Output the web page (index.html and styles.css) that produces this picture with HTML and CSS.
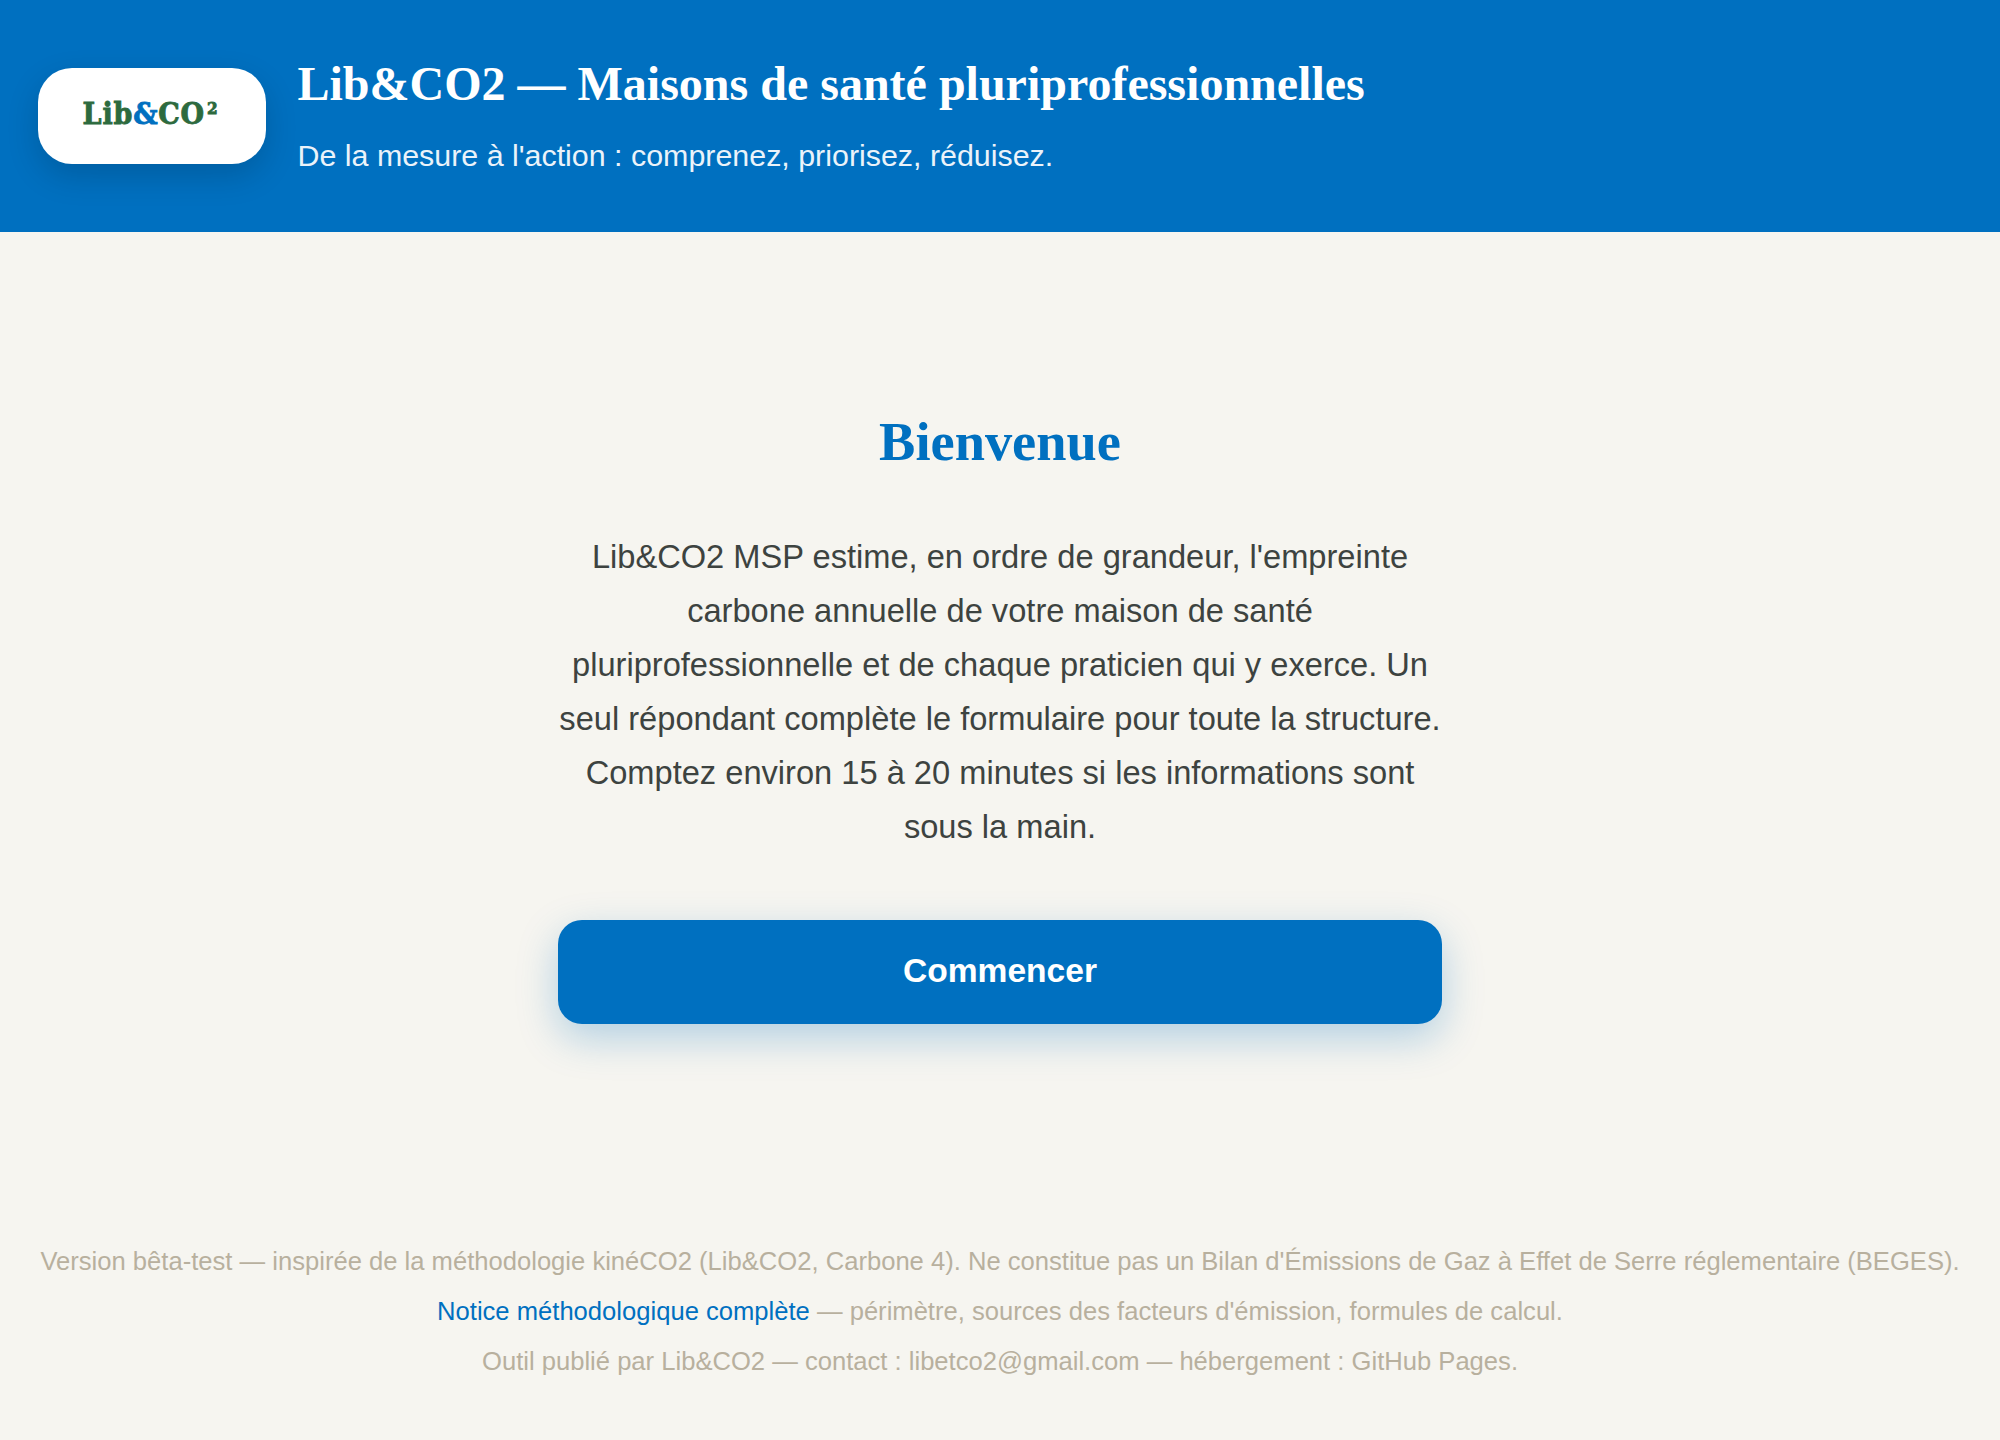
FILE: index.html
```html
<!DOCTYPE html>
<html lang="fr">
<head>
    <meta charset="UTF-8">
    <meta name="viewport" content="width=device-width, initial-scale=1.0">
    <title>Lib&amp;CO2 MSP</title>
    <link rel="stylesheet" href="styles.css">
</head>
<body>
    <header class="site-header">
        <div class="logo"><span class="logo-green">Lib</span><span class="logo-blue">&amp;</span><span class="logo-green">CO<span class="logo-sup">2</span></span></div>
        <div class="header-text">
            <h1>Lib&amp;CO2 — Maisons de santé pluriprofessionnelles</h1>
            <p>De la mesure à l'action : comprenez, priorisez, réduisez.</p>
        </div>
    </header>

    <main class="welcome">
        <h2>Bienvenue</h2>
        <p class="intro">Lib&amp;CO2 MSP estime, en ordre de grandeur, l'empreinte carbone annuelle de votre maison de santé pluriprofessionnelle et de chaque praticien qui y exerce. Un seul répondant complète le formulaire pour toute la structure. Comptez environ 15 à 20 minutes si les informations sont sous la main.</p>
        <button class="start-button" type="button">Commencer</button>
    </main>

    <footer class="site-footer">
        <p>Version bêta-test — inspirée de la méthodologie kinéCO2 (Lib&amp;CO2, Carbone 4). Ne constitue pas un Bilan d'Émissions de Gaz à Effet de Serre réglementaire (BEGES).</p>
        <p><a href="#">Notice méthodologique complète</a> — périmètre, sources des facteurs d'émission, formules de calcul.</p>
        <p>Outil publié par Lib&amp;CO2 — contact : libetco2@gmail.com — hébergement : GitHub Pages.</p>
    </footer>
</body>
</html>
```

FILE: styles.css
```css
body {
    font-family: 'Liberation Sans', Arial, sans-serif;
    background-color: #f6f5f0;
    margin: 0;
    padding: 0;
}

.site-header {
    background-color: #0070c0;
    color: #fff;
    height: 232px;
    box-sizing: border-box;
    padding: 0 38px;
    display: flex;
    align-items: center;
    gap: 31.5px;
}

.logo {
    width: 228px;
    height: 96px;
    padding: 0 3px 5px 0;
    box-sizing: border-box;
    background-color: #fff;
    border-radius: 34px;
    box-shadow: 0 12px 32px rgba(0, 0, 0, 0.16);
    display: flex;
    align-items: center;
    justify-content: center;
    font-family: 'DejaVu Serif Condensed', 'DejaVu Serif', serif;
    font-stretch: condensed;
    font-weight: bold;
    font-size: 30px;
    letter-spacing: 0.8px;
    -webkit-text-stroke: 0.8px;
}

.logo-green {
    color: #2d6a3e;
}

.logo-blue {
    color: #0070c0;
}

.logo-sup {
    font-size: 17px;
    vertical-align: 10px;
    margin-left: 2px;
    -webkit-text-stroke: 0.8px;
}

.header-text {
    margin-top: -3px;
}

.header-text h1 {
    font-family: 'Liberation Serif', 'Times New Roman', serif;
    font-size: 48px;
    font-weight: bold;
    margin: 0 0 27px;
}

.header-text p {
    font-size: 30.4px;
    margin: 0;
    opacity: 0.92;
}

.welcome {
    width: 884px;
    margin: 0 auto;
    padding-top: 179px;
    text-align: center;
}

.welcome h2 {
    font-family: 'Liberation Serif', 'Times New Roman', serif;
    font-size: 54.4px;
    color: #0070c0;
    margin: 0 0 57px;
}

.intro {
    font-size: 32.64px;
    line-height: 54px;
    color: #3d4340;
    margin: 0 0 66px;
}

.start-button {
    display: block;
    width: 100%;
    height: 104px;
    padding: 0 0 2px;
    border: none;
    border-radius: 24px;
    background-color: #0070c0;
    color: #fff;
    font-family: inherit;
    font-size: 33.6px;
    font-weight: bold;
    box-shadow: 0 14px 40px rgba(0, 112, 192, 0.28);
}

.site-footer {
    margin-top: 212px;
    text-align: center;
    font-size: 25.6px;
    line-height: 50px;
    color: #b8b09e;
}

.site-footer p {
    margin: 0;
}

.site-footer a {
    color: #0070c0;
    text-decoration: none;
}
```
